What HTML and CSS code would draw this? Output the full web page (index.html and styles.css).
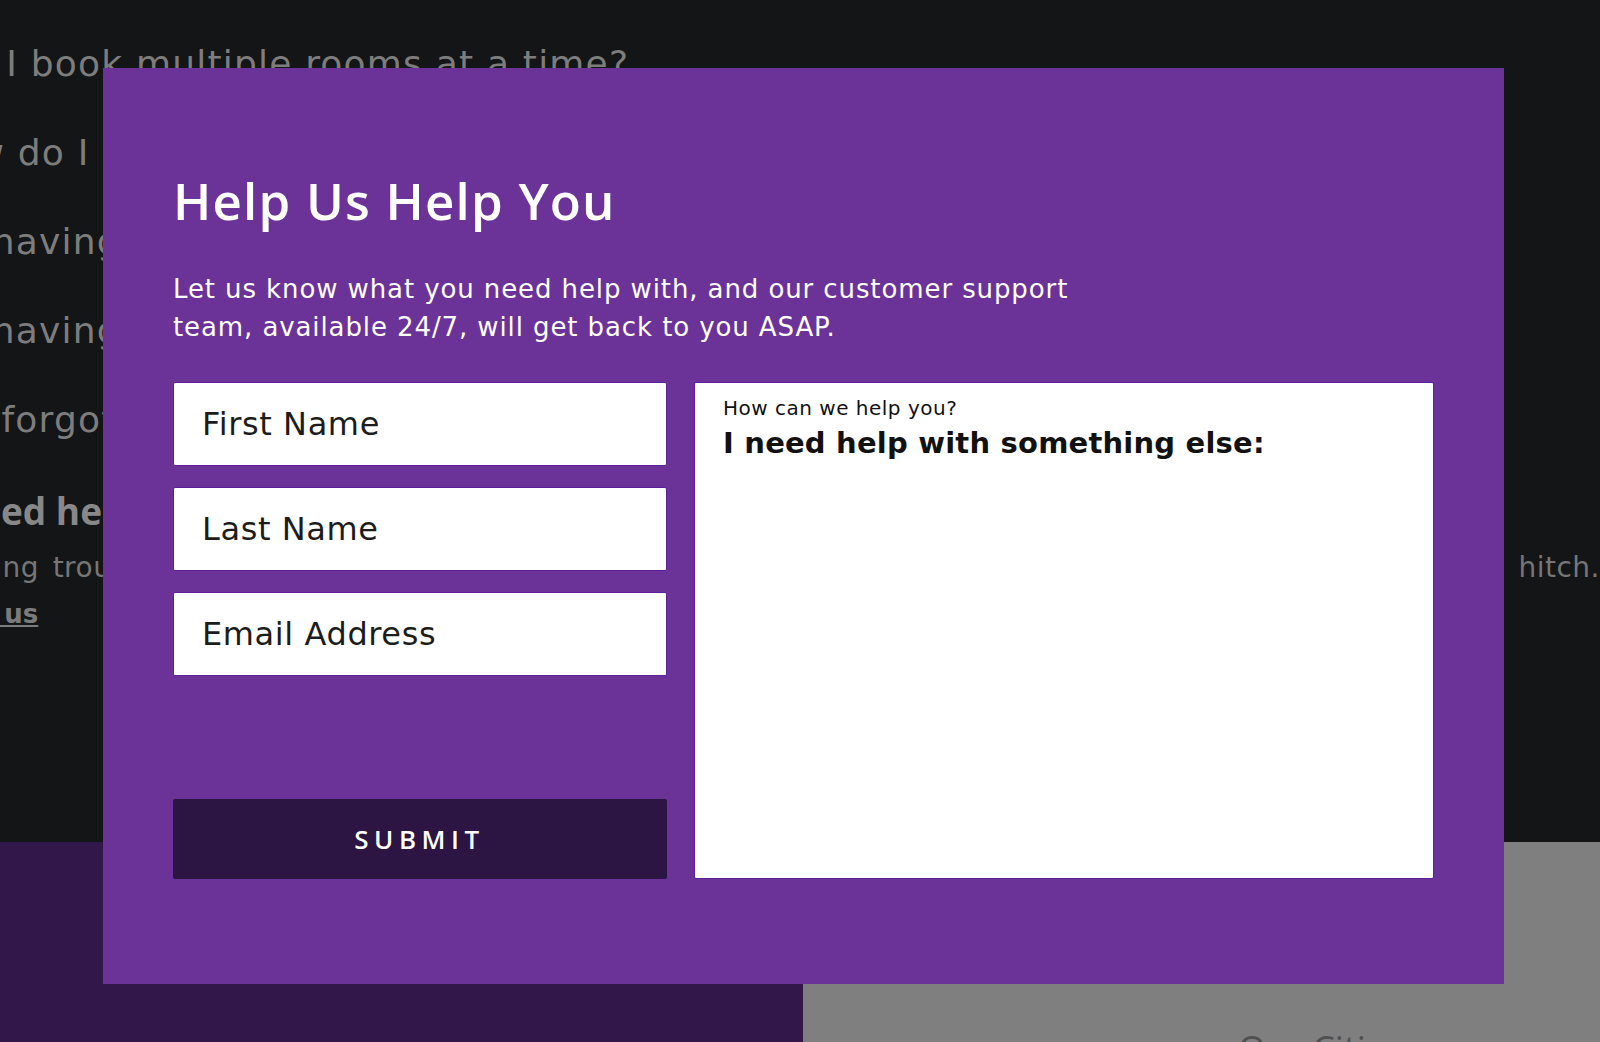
FILE: index.html
```html
<!DOCTYPE html>
<html lang="en">

<head>
    <meta charset="UTF-8">
    <title>Help Us Help You</title>
    <link rel="stylesheet" href="styles.css">
</head>

<body>
    <div id="page">
        <section class="faq">
            <ul class="questions">
                <li>Can I book multiple rooms at a time?</li>
                <li>Now, how do I &nbsp;change my reservation?</li>
                <li>I'm having trouble checking in</li>
                <li>I'm having trouble with my room</li>
                <li>I've forgotten my password</li>
            </ul>
            <div class="help">
                <h2>Need help?</h2>
                <p>Having trouble booking or checking in? Our team is on hand to make sure your stay goes off without a hitch.</p>
                <a href="#">Contact us</a>
            </div>
        </section>
        <div class="band">
            <div class="band-left"></div>
            <div class="band-right">
                <h3>Our Cities</h3>
            </div>
        </div>
    </div>

    <div id="modal">
        <h1>Help Us Help You</h1>
        <p class="intro">Let us know what you need help with, and our customer support<br>team, available 24/7, will get back to you ASAP.</p>
        <form class="support-form">
            <div class="fields">
                <input type="text" placeholder="First Name">
                <input type="text" placeholder="Last Name">
                <input type="text" placeholder="Email Address">
                <button type="button" class="submit">SUBMIT</button>
            </div>
            <label class="message">
                <span class="message-label">How can we help you?</span>
                <span class="message-topic">I need help with something else:</span>
                <textarea></textarea>
            </label>
        </form>
    </div>
</body>

</html>
```

FILE: styles.css
```css
body {
    margin: 0;
    overflow: hidden;
    font-family: "DejaVu Sans", sans-serif;
    background-color: #141517;
}

#page {
    height: 1042px;
    display: flex;
    flex-direction: column;
}

.faq {
    height: 842px;
    flex-shrink: 0;
    box-sizing: border-box;
    padding-top: 44px;
    overflow: hidden;
    white-space: nowrap;
    color: #7d7d7d;
}

.questions {
    list-style: none;
    margin: 0 0 0 -80px;
    padding: 0;
}

.questions li {
    font-size: 36px;
    line-height: 40px;
    letter-spacing: 1.2px;
    margin-bottom: 49px;
}

/* the second question sits a little further in */
.questions li:nth-child(2) {
    margin-left: -100px;
}

.help h2 {
    margin: 0 0 0 -51px;
    font-family: "Open Sans", sans-serif;
    font-size: 37px;
    line-height: 44px;
    font-weight: 700;
    color: #888888;
}

.help p {
    width: 1662px;
    margin: 18px 0 0 -62px;
    font-size: 28px;
    line-height: 34px;
    letter-spacing: 0.5px;
    text-align: justify;
    text-align-last: justify;
    color: #767676;
}

.help a {
    display: block;
    margin: 13px 0 0 -118px;
    font-size: 26px;
    line-height: 32px;
    font-weight: 700;
    color: #7b7b7b;
}

.band {
    height: 200px;
    flex-shrink: 0;
    display: flex;
    overflow: hidden;
}

.band-left {
    width: 803px;
    background-color: #32184a;
}

.band-right {
    flex: 1;
    background-color: #7f7f7f;
    padding: 187px 0 0 435px;
}

.band-right h3 {
    margin: 0;
    font-family: "Open Sans", sans-serif;
    font-size: 36px;
    line-height: 40px;
    font-weight: 400;
    color: #505050;
}

/* modal sits over the page */
#modal {
    position: absolute;
    left: 103px;
    top: 68px;
    width: 1401px;
    height: 916px;
    box-sizing: border-box;
    padding: 102px 70px 105px 70px;
    background-color: #6b3398;
    color: #ffffff;
    display: flex;
    flex-direction: column;
}

#modal h1 {
    margin: 0;
    font-family: "Open Sans", sans-serif;
    font-size: 51px;
    line-height: 61px;
    font-weight: 600;
    letter-spacing: 1.2px;
}

.intro {
    margin: 39px 0 0 0;
    font-size: 26px;
    line-height: 38px;
    letter-spacing: 0.9px;
}

.support-form {
    flex: 1;
    margin-top: 36px;
    display: grid;
    grid-template-columns: 494px 1fr;
    gap: 27px;
}

.fields {
    display: flex;
    flex-direction: column;
    gap: 21px;
}

.fields input {
    height: 84px;
    box-sizing: border-box;
    border: 1px solid #5d1f99;
    border-radius: 2px;
    padding: 0 28px;
    font-family: "DejaVu Sans", sans-serif;
    font-size: 32px;
    letter-spacing: 0.6px;
    color: #1c1c1c;
    background-color: #ffffff;
    outline: none;
}

.fields input::placeholder {
    color: #1c1c1c;
    opacity: 1;
}

.submit {
    margin-top: auto;
    height: 80px;
    border: none;
    border-radius: 2px;
    background-color: #2c1542;
    color: #ffffff;
    font-family: "Open Sans", sans-serif;
    font-size: 26px;
    font-weight: 600;
    letter-spacing: 5.5px;
    padding-left: 5px;
    cursor: pointer;
}

.message {
    display: flex;
    flex-direction: column;
    box-sizing: border-box;
    padding: 14px 28px 20px 28px;
    background-color: #ffffff;
    border: 1px solid #5d1f99;
    border-radius: 2px;
    color: #111111;
}

.message-label {
    font-size: 20px;
    line-height: 22px;
    letter-spacing: 0.5px;
}

.message-topic {
    margin-top: 7px;
    font-size: 29px;
    line-height: 34px;
    font-weight: 700;
    letter-spacing: 0.2px;
}

.message textarea {
    flex: 1;
    border: none;
    outline: none;
    resize: none;
    padding: 0;
    font-family: "DejaVu Sans", sans-serif;
    font-size: 22px;
}
```
